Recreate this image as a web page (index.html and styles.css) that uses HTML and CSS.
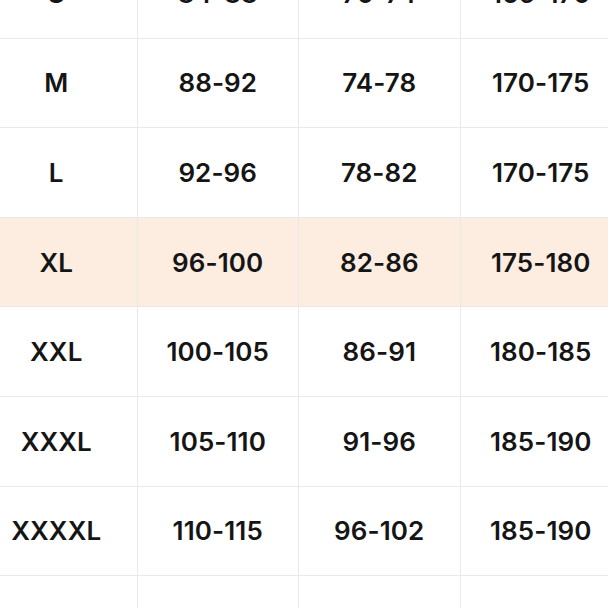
FILE: index.html
```html
<!DOCTYPE html>
<html>
<head>
<meta charset="utf-8">
<link rel="stylesheet" href="styles.css">
</head>
<body>
<div class="table">
  <div class="cell">S</div><div class="cell">84-88</div><div class="cell">70-74</div><div class="cell">165-170</div>
  <div class="cell">M</div><div class="cell">88-92</div><div class="cell">74-78</div><div class="cell">170-175</div>
  <div class="cell">L</div><div class="cell">92-96</div><div class="cell">78-82</div><div class="cell">170-175</div>
  <div class="cell hl">XL</div><div class="cell hl">96-100</div><div class="cell hl">82-86</div><div class="cell hl">175-180</div>
  <div class="cell">XXL</div><div class="cell">100-105</div><div class="cell">86-91</div><div class="cell">180-185</div>
  <div class="cell">XXXL</div><div class="cell">105-110</div><div class="cell">91-96</div><div class="cell">185-190</div>
  <div class="cell">XXXXL</div><div class="cell">110-115</div><div class="cell">96-102</div><div class="cell">185-190</div>
  <div class="cell">XXXXXL</div><div class="cell">115-120</div><div class="cell">102-108</div><div class="cell">190-195</div>
</div>
</body>
</html>
```
FILE: styles.css
```css
html, body {
  margin: 0;
  padding: 0;
  background: #fff;
  overflow: hidden;
  width: 608px;
  height: 608px;
}
.table {
  display: grid;
  grid-template-columns: repeat(4, 160.5px);
  grid-auto-rows: 88.6px;
  gap: 1px;
  background: #e9e9e9;
  margin-left: -24px;
  margin-top: -51px;
  width: max-content;
}
.cell {
  background: #fff;
  display: flex;
  align-items: center;
  justify-content: center;
  font-family: Inter, "Liberation Sans", sans-serif;
  font-weight: 600;
  font-size: 26px;
  color: #151515;
  letter-spacing: 0.1px;
}
.cell.hl {
  background: #fdede1;
}
```
